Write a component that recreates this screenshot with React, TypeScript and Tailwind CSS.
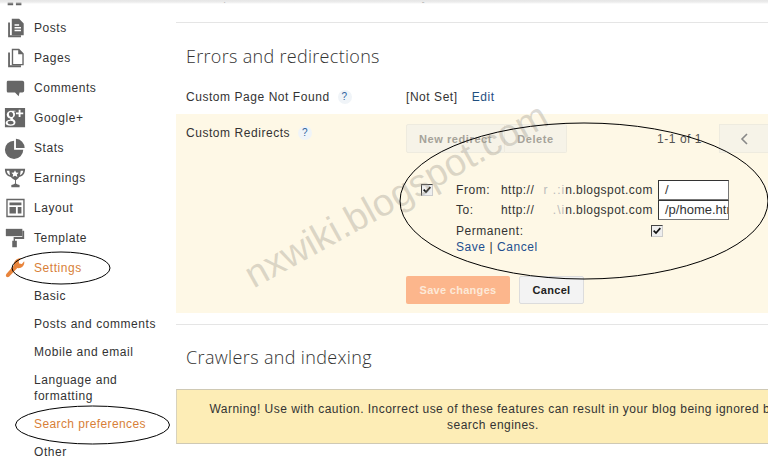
import React from "react";

const sans = "font-['Liberation_Sans',Arial,sans-serif]";

const I = ({ children }: { children: React.ReactNode }) => (
  <svg viewBox="0 0 24 24" className="w-[22px] h-[22px] fill-[#666]">{children}</svg>
);

const icons: Record<string, React.ReactNode> = {
  Overview: <I><path d="M4 3h6v6H4zM13 3h6v6h-6zM4 12h6v8H4zM13 12h6v8h-6z" /></I>,
  Posts: (
    <I>
      <g transform="translate(1.500 0)">
        <path d="M3 6h2v14h12v2H3z" />
        <path fillRule="evenodd" d="M7 2h8l5 5v13H7zM10 8v1.500h5V8zM10 11v1.500h7V11zM10 14v1.500h7V14z" />
      </g>
    </I>
  ),
  Pages: (
    <I>
      <g transform="translate(1.500 0)">
        <path d="M3 6h2v14h12v2H3z" />
        <path fillRule="evenodd" d="M7 2h8l5 5v13H7zM8.500 3.500v15h10V8h-4.500V3.500z" />
      </g>
    </I>
  ),
  Comments: <I><path d="M4 4h16q2 0 2 2v9q0 2-2 2h-3l-1 4-4-4H4q-1 0-1-2V6q0-2 1-2z" /></I>,
  "Google+": (
    <I>
      <path fillRule="evenodd" d="M1 1h22v21H1zM16 3v3h-3v2h3v3h2V8h3V6h-3V3zM8 4C4 4 3 7 3 8.500 3 11 5 12.500 7 12.500L6.800 14C4 14 1.800 15.500 1.800 17.500 1.800 19.500 4 20.500 7 20.500 10.500 20.500 12.500 18.800 12.500 16.800 12.500 14 9.500 13.800 9.500 12 11 11 12 10 12 8 12 6.500 11 5.500 10.500 5H12.500V4zM7.500 5.500C9 5.500 10 7 10 8.800 10 10.200 9.200 11 8 11 6.500 11 5.300 9.500 5.300 7.700 5.300 6.300 6.200 5.500 7.500 5.500zM7 15C9 15 10.500 16 10.500 17.300 10.500 18.500 9.300 19.200 7.500 19.200 5.500 19.200 4 18.300 4 17 4 15.800 5.200 15 7 15z" />
    </I>
  ),
  Stats: (
    <I>
      <path d="M11 4v10h10a10 10 0 1 1-10-10z" />
      <path d="M13 2a10 10 0 0 1 9.500 10H13z" />
    </I>
  ),
  Earnings: (
    <I>
      <path fillRule="evenodd" d="M1 2h22c0 5-2 8-6.500 9-1 2-2.500 3-3.500 3.300V18c1 1 3 1.300 4 1.500V22H8v-2.500c1-.2 3-.5 4-1.500v-3.700C11 14 9 13 7.500 11 3 10 1 7 1 2zM3 4c.3 2.500 1.500 4 3.500 5L5.800 4zM21 4h-2.800l-.7 5c2-1 3.200-2.500 3.500-5z" />
      <path className="fill-white" d="M12 3.500l1.200 2.500 2.800.3-2 1.900.6 2.800-2.600-1.400-2.600 1.400.6-2.800-2-1.900 2.800-.3z" />
    </I>
  ),
  Layout: (
    <I>
      <path fillRule="evenodd" d="M2.500 2h20v20h-20zM4 3.500v17h17v-17z" />
      <path d="M6 6h13v3H6zM6 11h7v7H6zM15 11h4v7h-4z" />
    </I>
  ),
  Template: (
    <I>
      <path d="M2 2h18v8H2z" />
      <path d="M20 4h2v9H12v2h2v7H9v-7h1.500v-4H20z" />
    </I>
  ),
  Settings: (
    <svg viewBox="0 0 24 24" className="w-[22px] h-[22px] fill-[#e8843c]">
      <path d="M2.500 18.500L11 9 14.500 12 5.500 21.500q-1.500 1-3 0-1-1.500 0-3z" />
      <path d="M11 10C10 5 13 1 19 1L16 4 16.500 7 19.500 7.500 22 4.500C23 9 19 13 14 12z" />
    </svg>
  ),
};

const NavRow = ({ label, active }: { label: string; active?: boolean }) => (
  <div className="flex h-[30px] items-center pl-[4px] shrink-0">
    <span className="w-[22px] flex justify-center">{icons[label]}</span>
    <span className={`ml-[8px] text-[12px] tracking-[0.55px] ${active ? "text-[#d87f38]" : "text-[#333]"}`}>{label}</span>
  </div>
);

const SubRow = ({ children, active, h = "h-[28px]" }: { children: React.ReactNode; active?: boolean; h?: string }) => (
  <div className={`${h} flex items-center pl-[34px] pr-[4px] leading-[16px] text-[12px] tracking-[0.55px] ${active ? "text-[#d87f38]" : "text-[#333]"}`}>
    <span className={active ? "tracking-[0.4px]" : ""}>{children}</span>
  </div>
);

const Help = () => (
  <span className="ml-[8px] inline-flex h-[14px] w-[14px] items-center justify-center rounded-full bg-[#f0f4f8] text-[10px] text-[#2f64a0]">?</span>
);

const Check = () => (
  <span className="flex h-[12px] w-[12px] items-center justify-center border border-[#444] border-r-[#ccc] border-b-[#ccc] bg-[#eeeeee] shrink-0">
    <svg viewBox="0 0 12 12" className="h-[10px] w-[10px]">
      <path d="M2 5.500L4.800 8.500 10 2.500" fill="none" stroke="#111" strokeWidth="2" />
    </svg>
  </span>
);

const Redacted = ({ children }: { children: string }) => (
  <span className="inline-block w-[31px] text-right text-[#bbb] tracking-[1px] whitespace-pre">{children}</span>
);

export default function App() {
  return (
    <div className={`${sans} relative flex h-[464px] w-[768px] overflow-hidden bg-white`}>
      <aside className="w-[176px] shrink-0 -mt-[17px]">
        <NavRow label="Overview" />
        <NavRow label="Posts" />
        <NavRow label="Pages" />
        <NavRow label="Comments" />
        <NavRow label="Google+" />
        <NavRow label="Stats" />
        <NavRow label="Earnings" />
        <NavRow label="Layout" />
        <NavRow label="Template" />
        <NavRow label="Settings" active />
        <div className="-mt-[1px]">
          <SubRow>Basic</SubRow>
          <SubRow>Posts and comments</SubRow>
          <SubRow>Mobile and email</SubRow>
          <SubRow h="h-[44px]">Language and formatting</SubRow>
          <SubRow active>Search preferences</SubRow>
          <SubRow>Other</SubRow>
        </div>
      </aside>

      <main className="w-[592px] shrink-0 text-[12px] tracking-[0.55px] text-[#333]">
        <div className="-mt-[11px] flex h-[34px] border-b border-[#e5e5e5] pl-[10px]">
          <span className="w-[220px] leading-[14px]">Description</span>
          <span className="leading-[14px]">Any</span>
        </div>
        <h2 className="mt-[20px] pl-[10px] font-['Open_Sans',sans-serif] text-[18px] font-light leading-[26px] tracking-[0.3px] text-[#333]">Errors and redirections</h2>
        <div className="mt-[20px] flex h-[25px] items-start pl-[10px] pt-[1px]">
          <span className="flex w-[220px] items-center leading-[14px]">Custom Page Not Found <Help /></span>
          <span className="leading-[14px]">[Not Set]</span>
          <span className="ml-[14px] leading-[14px] text-[#1f4f7f]">Edit</span>
        </div>
        <section className="flex h-[199px] bg-[#fef8e6] pl-[10px] pt-[10px]">
          <div className="mt-[2px] flex h-[14px] w-[220px] shrink-0 items-center leading-[14px]">Custom Redirects <Help /></div>
          <div className="flex-1 min-w-0">
            <div className="flex h-[29px] items-center">
              <div className="flex h-full w-[161px] shrink-0 whitespace-nowrap text-[11px] font-bold tracking-[0.6px] text-[#a5a299]">
                <span className="flex w-[99px] items-center justify-center rounded-l-[2px] border border-[#eeebdf] bg-[#f6f3e8] pt-[2px]">New redirect</span>
                <span className="flex flex-1 items-center justify-center rounded-r-[2px] border border-l-0 border-[#eeebdf] bg-[#f6f3e8] pt-[2px]">Delete</span>
              </div>
              <span className="ml-[90px] mt-[1px] w-[43px] shrink-0 whitespace-nowrap text-[#555]">1-1 of 1</span>
              <span className="ml-[19px] flex h-full w-[60px] shrink-0 items-center justify-center border border-[#eeebdf] bg-[#f6f3e8]">
                <svg viewBox="0 0 10 14" className="mr-[10px] h-[14px] w-[10px]"><path d="M8 2L3 7l5 5" fill="none" stroke="#888" strokeWidth="1.600" /></svg>
              </span>
            </div>
            <div className="ml-[15px] mt-[27px] flex">
              <div className="mt-[4px] w-[35px]"><Check /></div>
              <div className="w-[292px]">
                <div className="flex h-[20px] items-center">
                  <span className="w-[45px]">From:</span>
                  <span className="w-[157px] whitespace-nowrap tracking-[0.45px]">http://<Redacted>{"r .:i"}</Redacted>n.blogspot.com</span>
                  <span className="flex h-[20px] w-[71px] items-center overflow-hidden border border-[#777] border-t-[#333] border-l-[#333] bg-white pl-[6px] whitespace-nowrap text-[13px] tracking-normal">/</span>
                </div>
                <div className="flex h-[20px] items-center">
                  <span className="w-[45px]">To:</span>
                  <span className="w-[157px] whitespace-nowrap tracking-[0.45px]">http://<Redacted>{"  .\\i"}</Redacted>n.blogspot.com</span>
                  <span className="flex h-[20px] w-[71px] items-center overflow-hidden border border-[#777] border-t-[#333] border-l-[#333] bg-white pl-[6px] whitespace-nowrap text-[13px] tracking-normal">/p/home.html</span>
                </div>
                <div className="mt-[3px] flex h-[16px] items-center justify-between pr-[85px]">
                  <span>Permanent:</span>
                  <Check />
                </div>
                <div className="h-[16px] leading-[16px] text-[#333]">
                  <span className="text-[#1f4f8f]">Save</span> | <span className="text-[#1f4f8f]">Cancel</span>
                </div>
              </div>
            </div>
            <div className="mt-[21px] flex gap-[9px] text-[11px] font-bold tracking-[0.3px]">
              <span className="flex h-[28px] w-[104px] items-center justify-center rounded-[2px] bg-[#fcb68c] text-[#fde9d8]">Save changes</span>
              <span className="flex h-[28px] w-[65px] items-center justify-center rounded-[2px] border border-[#dcdcdc] bg-[#f3f3f3] text-[#222]">Cancel</span>
            </div>
          </div>
        </section>
        <div className="mt-[11px] border-t border-[#e5e5e5]" />
        <h2 className="mt-[19px] pl-[10px] font-['Open_Sans',sans-serif] text-[18px] font-light leading-[26px] tracking-[0.35px] text-[#333]">Crawlers and indexing</h2>
        <div className="mt-[19px] w-[634px] border border-[#cfc9b4] border-x-[#d8d2bc] bg-[#fdedb6] px-[20px] pt-[11px] pb-[10px] text-center leading-[16px] tracking-[0.47px] text-[#333]">
          Warning! Use with caution. Incorrect use of these features can result in your blog being ignored by search engines.
        </div>
      </main>

      <div className="pointer-events-none absolute left-0 top-0 h-[4px] w-full bg-gradient-to-b from-[#e6e6e6] via-[#ececec] to-transparent" />
      <span className="pointer-events-none absolute left-[226px] top-[173px] w-[340px] -rotate-[29deg] whitespace-nowrap text-center text-[38px] leading-[44px] text-[#999488]/35">nxwiki.blogspot.com</span>
      <svg className="pointer-events-none absolute inset-0" width="768" height="464" fill="none" stroke="#000" strokeWidth="1">
        <ellipse cx="584" cy="201" rx="184" ry="78" />
        <ellipse cx="61" cy="268" rx="49" ry="16" />
        <ellipse cx="92.500" cy="425" rx="77" ry="19" />
      </svg>
    </div>
  );
}
